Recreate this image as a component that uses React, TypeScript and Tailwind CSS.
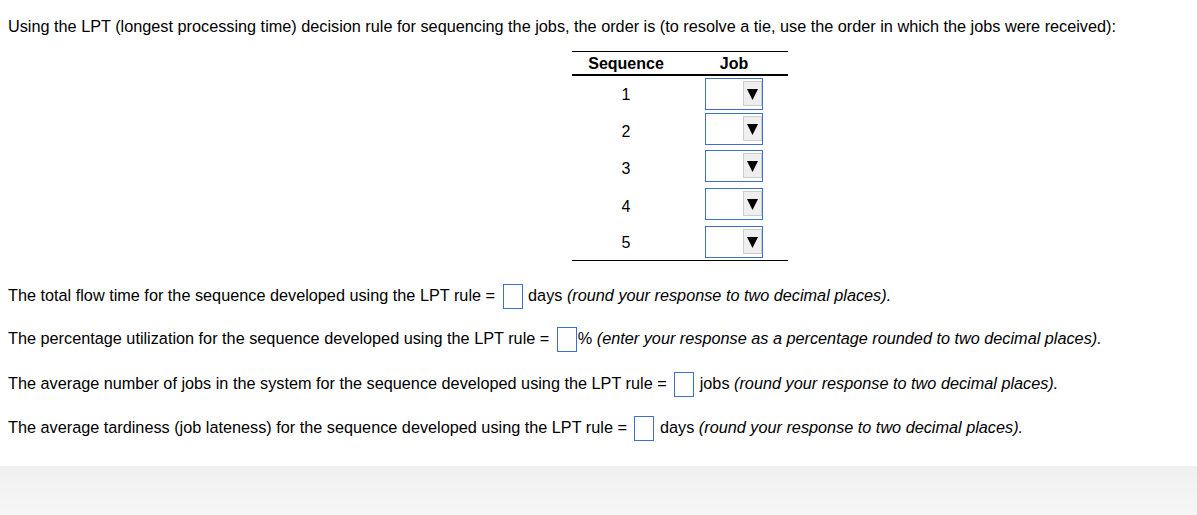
import React from "react";

const rows = [
  { n: 1, h: "h-[37px]", pt: "pt-[2px]" },
  { n: 2, h: "h-[37px]", pt: "pt-[0px]" },
  { n: 3, h: "h-[38px]", pt: "pt-[0px]" },
  { n: 4, h: "h-[38px]", pt: "pt-[0px]" },
  { n: 5, h: "h-[34px]", pt: "pt-[0px]" },
];

function Dropdown() {
  return (
    <div className="w-[58px] h-[32px] border border-[#3d6fce] bg-white flex items-start justify-end pt-[2px]">
      <div className="w-[19px] h-[25px] bg-[#efefef] border border-[#cdcdcd] flex items-center justify-center">
        <svg width="11" height="12" viewBox="0 0 11 12">
          <polygon points="0,1 11,1 5.5,12" fill="#000" />
        </svg>
      </div>
    </div>
  );
}

function Box() {
  return <span className="inline-block w-[20px] h-[25px] border border-[#3d6fce] bg-white align-middle ml-[3px] mr-[1px]" />;
}

export default function App() {
  return (
    <div
      className="min-h-screen flex flex-col bg-white text-black text-[16.25px]"
      style={{ fontFamily: '"Liberation Sans", Arial, sans-serif' }}
    >
      <div className="px-[8px]">
        <p className="pt-[15px] leading-[22px]">
          Using the LPT (longest processing time) decision rule for sequencing the jobs, the order is (to resolve a tie, use the order in which the jobs were received):
        </p>

        {/* sequence table */}
        <div className="ml-[564px] mt-[14px] w-[216px] border-t border-b border-black text-[16px]">
          <div className="grid grid-cols-2 h-[24px] items-center font-bold border-b-2 border-black">
            <div className="text-center">Sequence</div>
            <div className="text-center">Job</div>
          </div>
          {rows.map((r) => (
            <div key={r.n} className={`grid grid-cols-2 ${r.h}`}>
              <div className="flex items-center justify-center">{r.n}</div>
              <div className={`flex justify-center items-start ${r.pt}`}>
                <Dropdown />
              </div>
            </div>
          ))}
        </div>

        <div className="mt-[21px] leading-[26px] h-[26px] whitespace-nowrap">
          The total flow time for the sequence developed using the LPT rule = <Box /> days <i>(round your response to two decimal places).</i>
        </div>
        <div className="mt-[17px] leading-[26px] h-[26px] whitespace-nowrap">
          The percentage utilization for the sequence developed using the LPT rule = <Box />% <i>(enter your response as a percentage rounded to two decimal places).</i>
        </div>
        <div className="mt-[19px] leading-[26px] h-[26px] whitespace-nowrap">
          The average number of jobs in the system for the sequence developed using the LPT rule = <Box /> jobs <i>(round your response to two decimal places).</i>
        </div>
        <div className="mt-[18px] leading-[26px] h-[26px] whitespace-nowrap">
          The average tardiness (job lateness) for the sequence developed using the LPT rule = <Box /> days <i>(round your response to two decimal places).</i>
        </div>
      </div>

      <div className="mt-[26px] flex-1 bg-gradient-to-b from-[#f0f0f0] to-[#f6f6f6]" />
    </div>
  );
}
